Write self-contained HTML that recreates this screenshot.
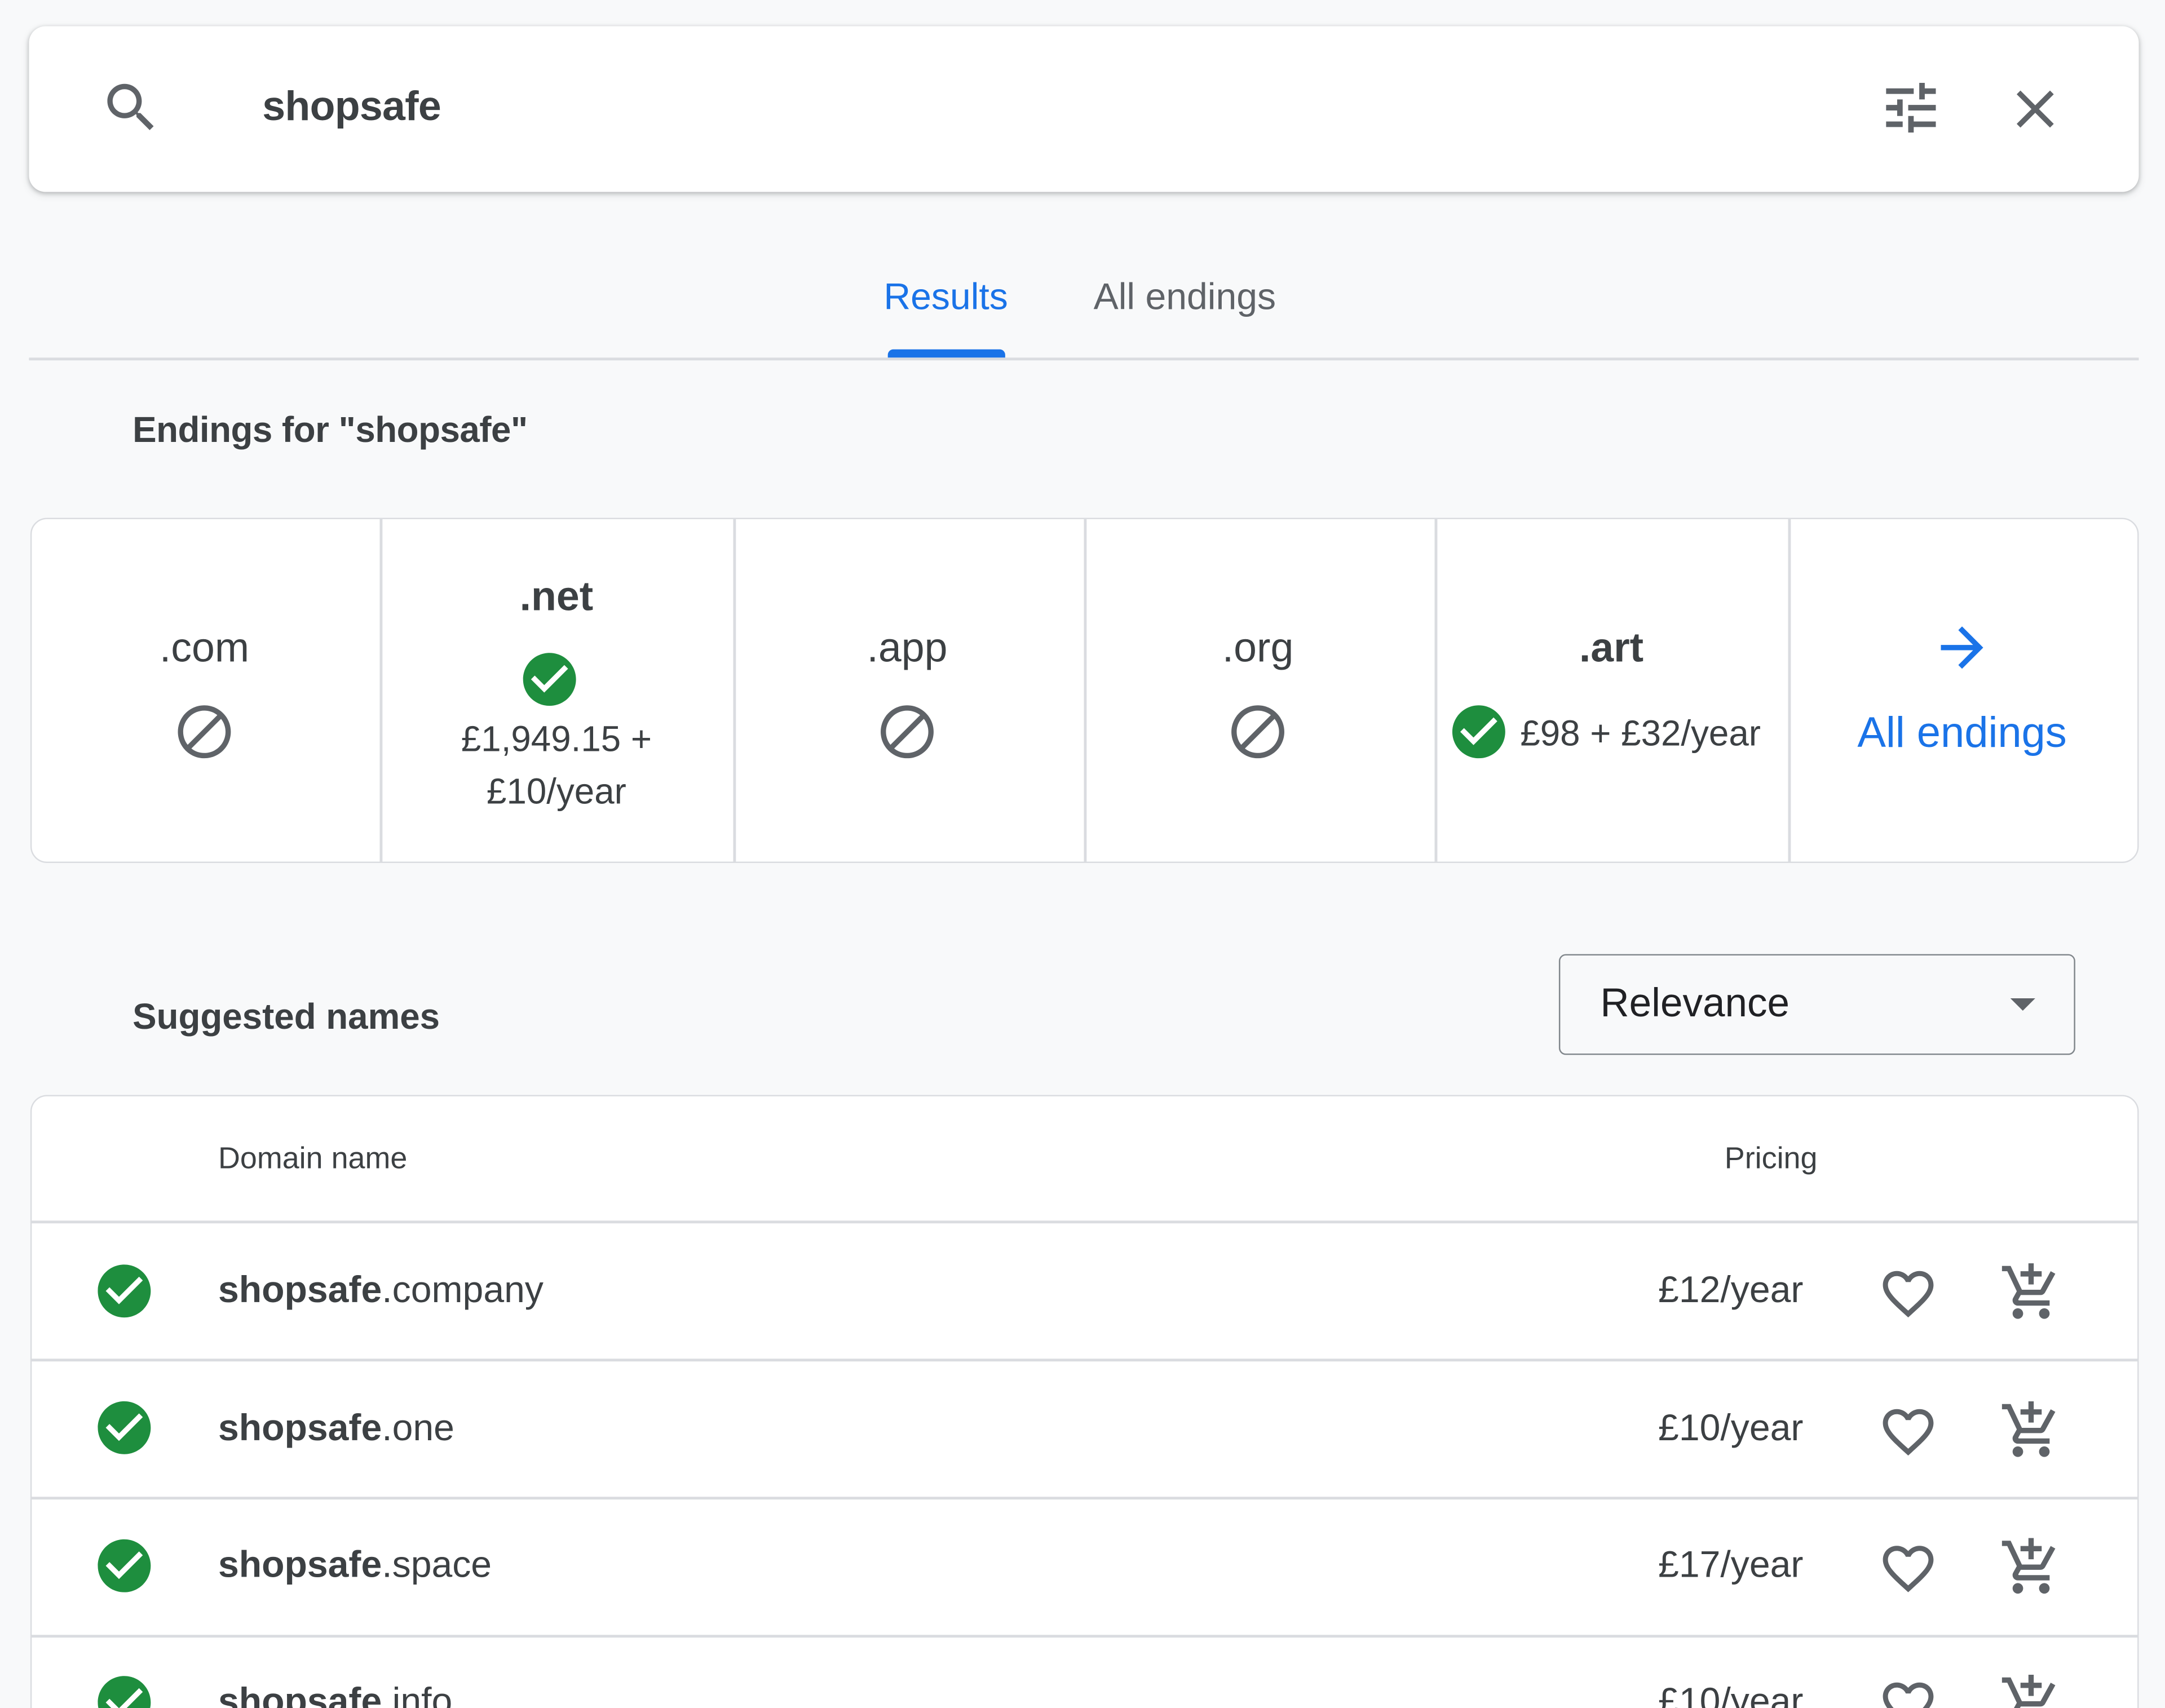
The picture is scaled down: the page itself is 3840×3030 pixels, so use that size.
<!DOCTYPE html>
<html><head><meta charset="utf-8"><style>
html,body{margin:0;padding:0;width:3840px;height:3030px;overflow:hidden;background:#f8f9fa;}
#w{position:absolute;left:0;top:0;width:1568px;height:1237px;transform:scale(2.449,2.4495);transform-origin:0 0;font-family:"Liberation Sans",Arial,sans-serif;color:#3c4043;overflow:hidden;}
.a{position:absolute;}
.t{position:absolute;white-space:nowrap;line-height:1;}
svg{position:absolute;}
.g{fill:#5f6368}
.ok{fill:#1e8e3e}
.ctr{transform:translateX(-50%);}
.line{position:absolute;height:1.5px;background:#dadce0;}
.vl{position:absolute;width:1.5px;background:#dadce0;top:0;bottom:0;}
</style></head><body><div id="w">
<div class="a" style="left:21px;top:19px;width:1528px;height:120px;background:#fff;border-radius:12px;box-shadow:0 1px 3px rgba(60,64,67,.3),0 2px 6px rgba(60,64,67,.12);"></div>
<svg style="left:72px;top:55px" width="46" height="46" viewBox="0 0 24 24"><path class="g" d="M15.5 14h-.79l-.28-.27C15.41 12.59 16 11.11 16 9.5 16 5.91 13.09 3 9.5 3S3 5.91 3 9.5 5.91 16 9.5 16c1.61 0 3.09-.59 4.23-1.57l.27.28v.79l5 4.99L20.49 19l-4.99-5zm-6 0C7.01 14 5 11.99 5 9.5S7.01 5 9.5 5 14 7.01 14 9.5 11.99 14 9.5 14z"/></svg>
<div class="t" style="left:190px;top:63px;font-size:30px;font-weight:bold;color:#3c4043;letter-spacing:-0.3px">shopsafe</div>
<svg style="left:1360px;top:54px" width="48" height="48" viewBox="0 0 24 24"><path class="g" d="M3 17v2h6v-2H3zM3 5v2h10V5H3zm10 16v-2h8v-2h-8v-2h-2v6h2zM7 9v2H3v2h4v2h2V9H7zm14 4v-2H11v2h10zm-6-4h2V7h4V5h-4V3h-2v6z"/></svg>
<svg style="left:1451px;top:56px" width="46" height="46" viewBox="0 0 24 24"><path class="g" d="M19 6.41L17.59 5 12 10.59 6.41 5 5 6.41 10.59 12 5 17.59 6.41 19 12 13.41 17.59 19 19 17.59 13.41 12z"/></svg>
<div class="t" style="left:640px;top:202px;font-size:27px;color:#1a73e8;font-weight:500">Results</div>
<div class="t" style="left:792px;top:202px;font-size:27px;color:#5f6368">All endings</div>
<div class="a" style="left:643px;top:253px;width:85px;height:6px;background:#1a73e8;border-radius:4px 4px 0 0"></div>
<div class="line" style="left:21px;top:259px;width:1528px;height:2px"></div>
<div class="t" style="left:96px;top:298px;font-size:26px;font-weight:bold;color:#3c4043;letter-spacing:-0.2px">Endings for "shopsafe"</div>
<div class="a" style="left:22px;top:375px;width:1525px;height:248px;background:#fff;border:1.5px solid #dadce0;border-radius:12px;">
<div class="vl" style="left:252px"></div><div class="vl" style="left:508px"></div><div class="vl" style="left:762px"></div><div class="vl" style="left:1016px"></div><div class="vl" style="left:1272px"></div>
</div>
<div class="t ctr" style="left:148px;top:455px;font-size:30px">.com</div>
<svg style="left:125px;top:507px" width="46" height="46" viewBox="0 0 24 24"><path class="g" d="M12 2C6.48 2 2 6.48 2 12s4.48 10 10 10 10-4.48 10-10S17.52 2 12 2zM4 12c0-4.42 3.58-8 8-8 1.85 0 3.55.63 4.9 1.69L5.69 16.9C4.63 15.55 4 13.85 4 12zm8 8c-1.850 0-3.55-.63-4.9-1.69L18.31 7.1C19.37 8.45 20 10.15 20 12c0 4.42-3.58 8-8 8z"/></svg>
<div class="t ctr" style="left:403px;top:418px;font-size:30px;font-weight:bold">.net</div>
<svg style="left:375px;top:469px" width="46" height="46" viewBox="0 0 24 24"><circle cx="12" cy="12" r="9" fill="#fff"/><path class="ok" d="M12 2C6.48 2 2 6.48 2 12s4.48 10 10 10 10-4.48 10-10S17.52 2 12 2zm-2 15l-5-5 1.41-1.41L10 14.17l7.59-7.59L19 8l-9 9z"/></svg>
<div class="t ctr" style="left:403px;top:522px;font-size:26px">£1,949.15 +</div>
<div class="t ctr" style="left:403px;top:560px;font-size:26px">£10/year</div>
<div class="t ctr" style="left:657px;top:455px;font-size:30px">.app</div>
<svg style="left:634px;top:507px" width="46" height="46" viewBox="0 0 24 24"><path class="g" d="M12 2C6.48 2 2 6.48 2 12s4.48 10 10 10 10-4.48 10-10S17.52 2 12 2zM4 12c0-4.42 3.58-8 8-8 1.85 0 3.55.63 4.9 1.69L5.69 16.9C4.63 15.55 4 13.85 4 12zm8 8c-1.85 0-3.55-.63-4.9-1.69L18.31 7.1C19.37 8.45 20 10.15 20 12c0 4.42-3.58 8-8 8z"/></svg>
<div class="t ctr" style="left:911px;top:455px;font-size:30px">.org</div>
<svg style="left:888px;top:507px" width="46" height="46" viewBox="0 0 24 24"><path class="g" d="M12 2C6.48 2 2 6.48 2 12s4.48 10 10 10 10-4.48 10-10S17.52 2 12 2zM4 12c0-4.42 3.58-8 8-8 1.85 0 3.55.63 4.9 1.69L5.69 16.9C4.63 15.55 4 13.85 4 12zm8 8c-1.85 0-3.55-.63-4.9-1.69L18.31 7.1C19.37 8.45 20 10.15 20 12c0 4.42-3.58 8-8 8z"/></svg>
<div class="t ctr" style="left:1167px;top:455px;font-size:30px;font-weight:bold">.art</div>
<svg style="left:1048px;top:507px" width="46" height="46" viewBox="0 0 24 24"><circle cx="12" cy="12" r="9" fill="#fff"/><path class="ok" d="M12 2C6.48 2 2 6.48 2 12s4.48 10 10 10 10-4.48 10-10S17.52 2 12 2zm-2 15l-5-5 1.41-1.41L10 14.17l7.59-7.59L19 8l-9 9z"/></svg>
<div class="t" style="left:1101px;top:518px;font-size:26px">£98 + £32/year</div>
<svg style="left:1398px;top:446px" width="46" height="46" viewBox="0 0 24 24"><path fill="#1a73e8" d="M12 4l-1.41 1.41L16.17 11H4v2h12.17l-5.58 5.59L12 20l8-8z"/></svg>
<div class="t ctr" style="left:1421px;top:515px;font-size:31px;color:#1a73e8;font-weight:500">All endings</div>
<div class="t" style="left:96px;top:723px;font-size:26px;font-weight:bold">Suggested names</div>
<div class="a" style="left:1129px;top:691px;width:372px;height:71px;border:1.5px solid #80868b;border-radius:5px;"></div>
<div class="t" style="left:1159px;top:713px;font-size:29px;color:#202124">Relevance</div>
<div class="a" style="left:1456px;top:723px;width:0;height:0;border-left:9px solid transparent;border-right:9px solid transparent;border-top:9px solid #5f6368"></div>
<div class="a" style="left:22px;top:793px;width:1525px;height:480px;background:#fff;border:1.5px solid #dadce0;border-radius:12px 12px 0 0;"></div>
<div class="t" style="left:158px;top:828px;font-size:22px">Domain name</div>
<div class="t" style="left:1249px;top:828px;font-size:22px">Pricing</div>
<div class="line" style="left:22px;top:884px;width:1527px"></div>
<div class="line" style="left:22px;top:984px;width:1527px"></div>
<div class="line" style="left:22px;top:1084px;width:1527px"></div>
<div class="line" style="left:22px;top:1184px;width:1527px"></div>

<svg style="left:67px;top:912px" width="46" height="46" viewBox="0 0 24 24"><circle cx="12" cy="12" r="9" fill="#fff"/><path class="ok" d="M12 2C6.48 2 2 6.48 2 12s4.48 10 10 10 10-4.48 10-10S17.52 2 12 2zm-2 15l-5-5 1.41-1.41L10 14.17l7.59-7.59L19 8l-9 9z"/></svg>
<div class="t" style="left:158px;top:921px;font-size:27px"><b>shopsafe</b>.company</div>
<div class="t" style="right:262px;top:921px;font-size:27px">£12/year</div>
<svg style="left:1360px;top:915px" width="44" height="44" viewBox="0 0 24 24"><path class="g" d="M16.5 3c-1.74 0-3.41.81-4.5 2.09C10.91 3.81 9.24 3 7.5 3 4.42 3 2 5.42 2 8.5c0 3.78 3.4 6.86 8.55 11.54L12 21.35l1.45-1.32C18.6 15.36 22 12.28 22 8.5 22 5.42 19.58 3 16.5 3zm-4.4 15.55l-.1.1-.1-.1C7.14 14.24 4 11.39 4 8.5 4 6.5 5.5 5 7.5 5c1.54 0 3.04.99 3.57 2.36h1.87C13.46 5.99 14.96 5 16.5 5c2 0 3.5 1.5 3.5 3.5 0 2.89-3.14 5.74-7.9 10.05z"/></svg>
<svg style="left:1448px;top:913px" width="46" height="46" viewBox="0 0 24 24"><path class="g" d="M11 9h2V6h3V4h-3V1h-2v3H8v2h3v3zm-4 9c-1.1 0-1.99.9-1.99 2S5.9 22 7 22s2-.9 2-2-.9-2-2-2zm10 0c-1.1 0-1.99.9-1.99 2s.89 2 1.99 2 2-.9 2-2-.9-2-2-2zm-9.83-3.25l.03-.12.9-1.63h7.45c.75 0 1.41-.41 1.75-1.03l3.86-7.01L19.42 4h-.01l-1.1 2-2.76 5H8.53l-.13-.27L6.16 6l-.95-2-.94-2H1v2h2l3.6 7.59-1.35 2.45c-.16.28-.25.61-.25.96 0 1.1.9 2 2 2h12v-2H7.42c-.13 0-.25-.11-.25-.25z"/></svg>

<svg style="left:67px;top:1011px" width="46" height="46" viewBox="0 0 24 24"><circle cx="12" cy="12" r="9" fill="#fff"/><path class="ok" d="M12 2C6.48 2 2 6.48 2 12s4.48 10 10 10 10-4.48 10-10S17.52 2 12 2zm-2 15l-5-5 1.41-1.41L10 14.17l7.59-7.59L19 8l-9 9z"/></svg>
<div class="t" style="left:158px;top:1021px;font-size:27px"><b>shopsafe</b>.one</div>
<div class="t" style="right:262px;top:1021px;font-size:27px">£10/year</div>
<svg style="left:1360px;top:1015px" width="44" height="44" viewBox="0 0 24 24"><path class="g" d="M16.5 3c-1.74 0-3.41.81-4.5 2.09C10.91 3.81 9.24 3 7.5 3 4.42 3 2 5.42 2 8.5c0 3.78 3.4 6.86 8.55 11.54L12 21.35l1.45-1.32C18.6 15.36 22 12.28 22 8.5 22 5.42 19.58 3 16.5 3zm-4.4 15.55l-.1.1-.1-.1C7.14 14.24 4 11.39 4 8.5 4 6.5 5.5 5 7.5 5c1.54 0 3.04.99 3.57 2.36h1.87C13.46 5.99 14.96 5 16.5 5c2 0 3.5 1.5 3.5 3.5 0 2.89-3.14 5.74-7.9 10.05z"/></svg>
<svg style="left:1448px;top:1013px" width="46" height="46" viewBox="0 0 24 24"><path class="g" d="M11 9h2V6h3V4h-3V1h-2v3H8v2h3v3zm-4 9c-1.1 0-1.99.9-1.99 2S5.9 22 7 22s2-.9 2-2-.9-2-2-2zm10 0c-1.1 0-1.99.9-1.99 2s.89 2 1.99 2 2-.9 2-2-.9-2-2-2zm-9.83-3.25l.03-.12.9-1.63h7.45c.75 0 1.41-.41 1.75-1.03l3.86-7.01L19.42 4h-.01l-1.1 2-2.76 5H8.53l-.13-.27L6.16 6l-.95-2-.94-2H1v2h2l3.6 7.59-1.35 2.45c-.16.28-.25.61-.25.96 0 1.1.9 2 2 2h12v-2H7.42c-.13 0-.25-.11-.25-.25z"/></svg>

<svg style="left:67px;top:1111px" width="46" height="46" viewBox="0 0 24 24"><circle cx="12" cy="12" r="9" fill="#fff"/><path class="ok" d="M12 2C6.48 2 2 6.48 2 12s4.48 10 10 10 10-4.48 10-10S17.52 2 12 2zm-2 15l-5-5 1.41-1.41L10 14.17l7.59-7.59L19 8l-9 9z"/></svg>
<div class="t" style="left:158px;top:1120px;font-size:27px"><b>shopsafe</b>.space</div>
<div class="t" style="right:262px;top:1120px;font-size:27px">£17/year</div>
<svg style="left:1360px;top:1114px" width="44" height="44" viewBox="0 0 24 24"><path class="g" d="M16.5 3c-1.74 0-3.41.81-4.5 2.09C10.91 3.81 9.24 3 7.5 3 4.42 3 2 5.42 2 8.5c0 3.78 3.4 6.86 8.55 11.54L12 21.35l1.45-1.32C18.6 15.36 22 12.28 22 8.5 22 5.42 19.58 3 16.5 3zm-4.4 15.55l-.1.1-.1-.1C7.14 14.24 4 11.39 4 8.5 4 6.5 5.5 5 7.5 5c1.54 0 3.04.99 3.57 2.36h1.87C13.46 5.99 14.96 5 16.5 5c2 0 3.5 1.5 3.5 3.5 0 2.89-3.14 5.74-7.9 10.05z"/></svg>
<svg style="left:1448px;top:1112px" width="46" height="46" viewBox="0 0 24 24"><path class="g" d="M11 9h2V6h3V4h-3V1h-2v3H8v2h3v3zm-4 9c-1.1 0-1.99.9-1.99 2S5.9 22 7 22s2-.9 2-2-.9-2-2-2zm10 0c-1.1 0-1.99.9-1.99 2s.89 2 1.99 2 2-.9 2-2-.9-2-2-2zm-9.83-3.25l.03-.12.9-1.63h7.45c.75 0 1.41-.41 1.75-1.03l3.86-7.01L19.42 4h-.01l-1.1 2-2.76 5H8.53l-.13-.27L6.16 6l-.95-2-.94-2H1v2h2l3.6 7.59-1.35 2.45c-.16.28-.25.61-.25.96 0 1.1.9 2 2 2h12v-2H7.42c-.13 0-.25-.11-.25-.25z"/></svg>

<svg style="left:67px;top:1210px" width="46" height="46" viewBox="0 0 24 24"><circle cx="12" cy="12" r="9" fill="#fff"/><path class="ok" d="M12 2C6.48 2 2 6.48 2 12s4.48 10 10 10 10-4.48 10-10S17.52 2 12 2zm-2 15l-5-5 1.41-1.41L10 14.17l7.59-7.59L19 8l-9 9z"/></svg>
<div class="t" style="left:158px;top:1219px;font-size:27px"><b>shopsafe</b>.info</div>
<div class="t" style="right:262px;top:1219px;font-size:27px">£10/year</div>
<svg style="left:1360px;top:1213px" width="44" height="44" viewBox="0 0 24 24"><path class="g" d="M16.5 3c-1.74 0-3.41.81-4.5 2.09C10.91 3.81 9.24 3 7.5 3 4.42 3 2 5.42 2 8.5c0 3.78 3.4 6.86 8.55 11.54L12 21.35l1.45-1.32C18.6 15.36 22 12.28 22 8.5 22 5.42 19.58 3 16.5 3zm-4.4 15.55l-.1.1-.1-.1C7.14 14.24 4 11.39 4 8.5 4 6.5 5.5 5 7.5 5c1.54 0 3.04.99 3.57 2.36h1.87C13.46 5.99 14.96 5 16.5 5c2 0 3.5 1.5 3.5 3.5 0 2.89-3.14 5.74-7.9 10.05z"/></svg>
<svg style="left:1448px;top:1211px" width="46" height="46" viewBox="0 0 24 24"><path class="g" d="M11 9h2V6h3V4h-3V1h-2v3H8v2h3v3zm-4 9c-1.1 0-1.99.9-1.99 2S5.9 22 7 22s2-.9 2-2-.9-2-2-2zm10 0c-1.1 0-1.99.9-1.99 2s.89 2 1.99 2 2-.9 2-2-.9-2-2-2zm-9.83-3.25l.03-.12.9-1.63h7.45c.75 0 1.41-.41 1.75-1.03l3.86-7.01L19.42 4h-.01l-1.1 2-2.76 5H8.53l-.13-.27L6.16 6l-.95-2-.94-2H1v2h2l3.6 7.59-1.35 2.45c-.16.28-.25.61-.25.96 0 1.1.9 2 2 2h12v-2H7.42c-.13 0-.25-.11-.25-.25z"/></svg>
</div></body></html>
